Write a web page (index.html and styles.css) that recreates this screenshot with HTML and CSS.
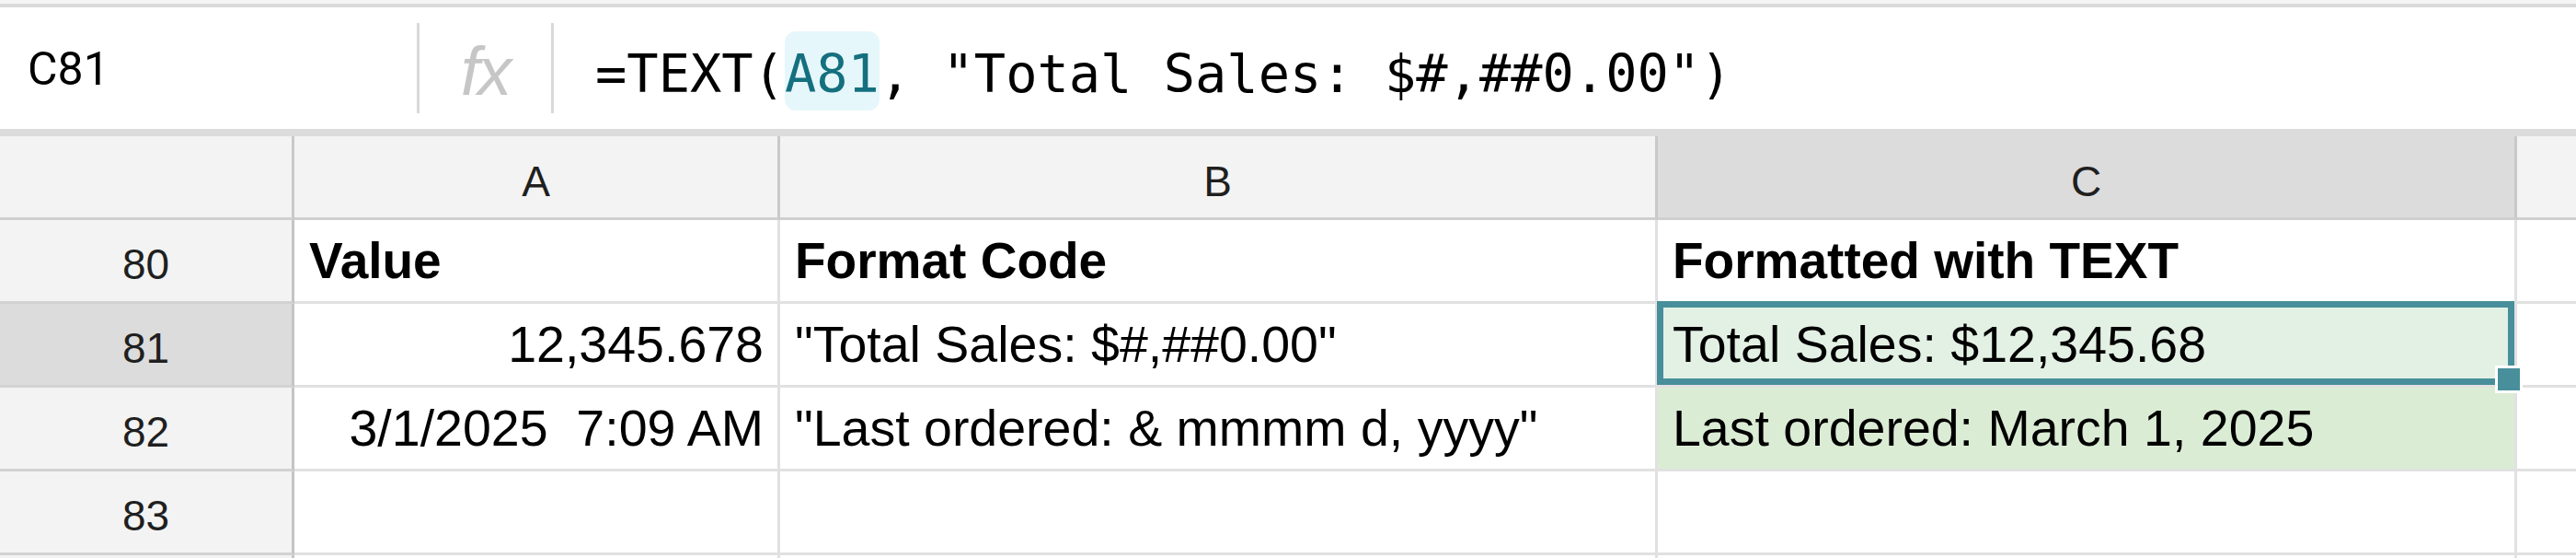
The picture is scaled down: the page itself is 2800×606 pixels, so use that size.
FILE: index.html
```html
<!DOCTYPE html>
<html lang="en">
<head>
<meta charset="utf-8">
<title>Sheet</title>
<link rel="stylesheet" href="styles.css">
</head>
<body>
<div class="app">
  <div class="top-strip"></div>
  <div class="formula-bar">
    <div class="name-box">C81</div>
    <div class="sep"></div>
    <div class="fx">fx</div>
    <div class="sep"></div>
    <div class="formula">=TEXT(<span class="ref">A81</span>, "Total Sales: $#,##0.00")</div>
  </div>
  <div class="grid">
    <div class="c hdr corner"></div>
    <div class="c hdr col">A</div>
    <div class="c hdr col">B</div>
    <div class="c hdr col sel">C</div>
    <div class="c hdr col last"></div>

    <div class="c hdr row">80</div>
    <div class="c b">Value</div>
    <div class="c b">Format Code</div>
    <div class="c b">Formatted with TEXT</div>
    <div class="c last"></div>

    <div class="c hdr row sel">81</div>
    <div class="c r">12,345.678</div>
    <div class="c">"Total Sales: $#,##0.00"</div>
    <div class="c active">Total Sales: $12,345.68<div class="selection"></div><div class="handle"></div></div>
    <div class="c last"></div>

    <div class="c hdr row">82</div>
    <div class="c r">3/1/2025  7:09 AM</div>
    <div class="c">"Last ordered: &amp; mmmm d, yyyy"</div>
    <div class="c green">Last ordered: March 1, 2025</div>
    <div class="c last"></div>

    <div class="c hdr row">83</div>
    <div class="c"></div>
    <div class="c"></div>
    <div class="c"></div>
    <div class="c last"></div>

    <div class="c hdr row"></div>
    <div class="c"></div>
    <div class="c"></div>
    <div class="c"></div>
    <div class="c last"></div>
  </div>
</div>
</body>
</html>
```

FILE: styles.css
```css
html, body {
  margin: 0;
  padding: 0;
  background: #ffffff;
}
.app {
  width: 2800px;
  height: 606px;
  overflow: hidden;
  font-family: "Liberation Sans", Arial, sans-serif;
  color: #000;
}
.top-strip {
  height: 4px;
  background: #f4f4f4;
}
.formula-bar {
  height: 132px;
  border-top: 4px solid #dadada;
  border-bottom: 8px solid #dcdcdc;
  display: flex;
  align-items: flex-start;
  background: #fff;
}
.name-box {
  width: 423px;
  padding-left: 30px;
  padding-top: 42px;
  font-family: "Roboto", "Liberation Sans", sans-serif;
  font-size: 50px;
  line-height: 1;
  color: #000;
}
.sep {
  width: 3px;
  height: 98px;
  margin-top: 17px;
  background: #d9d9d9;
}
.fx {
  width: 143px;
  text-align: center;
  padding-top: 33px;
  font-size: 74px;
  line-height: 1;
  font-style: italic;
  color: #c6c6c6;
  letter-spacing: -2px;
}
.formula {
  padding-left: 45px;
  padding-top: 44px;
  font-family: "DejaVu Sans Mono", "Liberation Mono", monospace;
  font-size: 57px;
  line-height: 1;
  white-space: pre;
  color: #000;
}
.ref {
  color: #14707f;
  background: #e6f7fb;
  border-radius: 12px;
  padding: 13px 0 7px;
}
.grid {
  display: grid;
  grid-template-columns: 320px 528px 954px 934px 1fr;
  grid-auto-rows: 91px;
}
.c {
  box-sizing: border-box;
  border-right: 3px solid #e1e1e1;
  border-bottom: 3px solid #e1e1e1;
  display: flex;
  align-items: flex-end;
  padding: 0 15px 16px 16px;
  font-size: 55.5px;
  line-height: 1;
  white-space: pre;
  position: relative;
}
.c.b {
  font-size: 55px;
}
.c.last {
  border-right: none;
}
.hdr {
  background: #f3f3f3;
  font-size: 46px;
  color: #1f1f1f;
  justify-content: center;
  border-right-color: #c9c9c9;
  border-bottom-color: #cfcfcf;
  padding-left: 0;
  padding-right: 0;
}
.hdr.row {
  padding-bottom: 17px;
  border-right-color: #c4c4c4;
  border-bottom-color: #d2d2d2;
}
.hdr.sel {
  background: #dcdcdc;
}
.b {
  font-weight: bold;
}
.r {
  justify-content: flex-end;
}
.active {
  background: #e3f1e5;
}
.green {
  background: #dbecd5;
}
.selection {
  position: absolute;
  left: -1px;
  top: -3px;
  right: 0;
  bottom: 0;
  border: 7px solid #488f9b;
}
.handle {
  position: absolute;
  right: -9px;
  bottom: -9px;
  width: 24px;
  height: 24px;
  background: #488f9b;
  border: 3px solid #ffffff;
  z-index: 2;
}
```
